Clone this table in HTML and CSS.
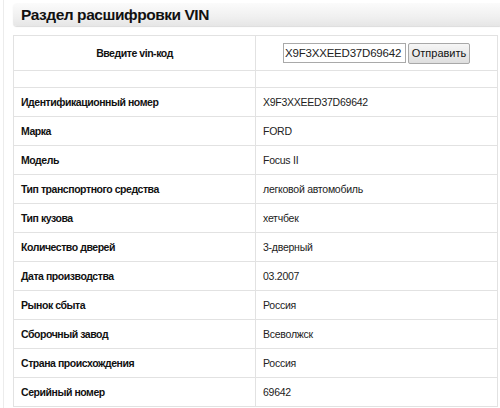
FILE: index.html
```html
<!DOCTYPE html>
<html lang="ru">
<head>
<meta charset="utf-8">
<link rel="stylesheet" href="styles.css">
</head>
<body>
<div class="page">
  <h1 class="title">Раздел расшифровки VIN</h1>
  <table class="vin">
    <colgroup>
      <col class="col-label">
      <col class="col-value">
    </colgroup>
    <tr class="form-row">
      <th class="center">Введите vin-код</th>
      <td class="center">
        <form class="vin-form">
          <input class="vin-input" type="text" value="X9F3XXEED37D69642">
          <button class="vin-btn" type="button">Отправить</button>
        </form>
      </td>
    </tr>
    <tr class="empty"><th></th><td></td></tr>
    <tr><th>Идентификационный номер</th><td>X9F3XXEED37D69642</td></tr>
    <tr><th>Марка</th><td>FORD</td></tr>
    <tr><th>Модель</th><td>Focus II</td></tr>
    <tr><th>Тип транспортного средства</th><td>легковой автомобиль</td></tr>
    <tr><th>Тип кузова</th><td>хетчбек</td></tr>
    <tr><th>Количество дверей</th><td>3-дверный</td></tr>
    <tr><th>Дата производства</th><td>03.2007</td></tr>
    <tr><th>Рынок сбыта</th><td>Россия</td></tr>
    <tr><th>Сборочный завод</th><td>Всеволжск</td></tr>
    <tr><th>Страна происхождения</th><td>Россия</td></tr>
    <tr><th>Серийный номер</th><td>69642</td></tr>
  </table>
</div>
</body>
</html>
```
FILE: styles.css
```css
html, body {
  margin: 0;
  padding: 0;
  background: #fff;
  font-family: "Liberation Sans", Arial, sans-serif;
  color: #111;
}
.page {
  margin-left: 3px;
  border-left: 1px solid #ececec;
  padding-left: 9px;
  padding-top: 3px;
  min-height: 408px;
  box-sizing: border-box;
}
.title {
  margin: 0;
  height: 23px;
  line-height: 23px;
  padding-left: 8px;
  font-size: 15.5px;
  letter-spacing: -0.45px;
  font-weight: bold;
  color: #111;
  border-radius: 4px 0 0 4px;
  background: linear-gradient(to bottom, #fbfbfb 0%, #f0f0f0 60%, #e6e6e6 100%);
  box-shadow: 0 1px 1px #dcdcdc;
}
.vin {
  margin-top: 9px;
  width: 485px;
  border-collapse: collapse;
  table-layout: fixed;
  border: 1px solid #dedede;
}
.col-label {
  width: 242px;
}
.vin th, .vin td {
  border: 1px solid #e2e2e2;
  height: 28px;
  padding: 0 0 0 7px;
  text-align: left;
  vertical-align: middle;
}
.vin th {
  font-size: 10.5px;
  letter-spacing: -0.45px;
  font-weight: bold;
  color: #111;
}
.vin td {
  font-size: 10.5px;
  letter-spacing: -0.25px;
  color: #222;
}
.vin .center {
  text-align: center;
  padding: 0;
}
.form-row th, .form-row td {
  height: 34px;
}
.empty th, .empty td {
  height: 16px;
}
.vin-form {
  margin: 0;
  display: inline-flex;
  align-items: center;
  gap: 2px;
  letter-spacing: 0;
}
.vin-input {
  width: 123px;
  height: 20px;
  box-sizing: border-box;
  border: 1px solid #a9a9a9;
  padding: 0 1px;
  font-family: "Liberation Sans", Arial, sans-serif;
  font-size: 11.5px;
  letter-spacing: -0.2px;
  color: #222;
}
.vin-btn {
  height: 21px;
  width: 62px;
  padding: 0;
  border: 1px solid #a8a8a8;
  border-radius: 2px;
  background: linear-gradient(to bottom, #f6f6f6, #dedede);
  font-family: "Liberation Sans", Arial, sans-serif;
  font-size: 11px;
  color: #111;
}
```
